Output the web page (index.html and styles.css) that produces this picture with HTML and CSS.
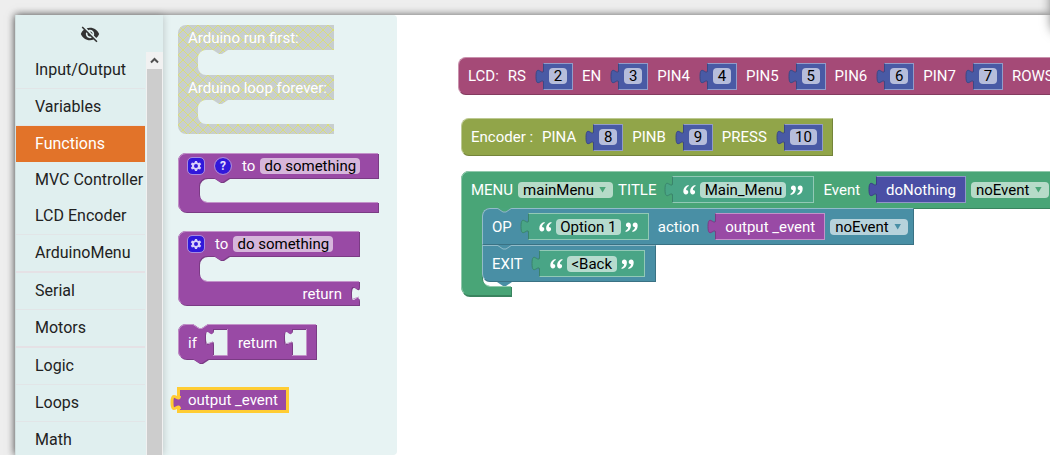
FILE: index.html
```html
<!DOCTYPE html>
<html lang="en">
<head>
<meta charset="utf-8">
<title>Block editor</title>
<link rel="stylesheet" href="styles.css">
</head>
<body>
<svg class="defs" aria-hidden="true">
  <defs>
    <pattern id="disabled" patternUnits="userSpaceOnUse" width="10" height="10">
      <rect width="10" height="10" fill="#aaa"/>
      <path d="M0 0l10 10M10 0l-10 10" stroke="#cc0"/>
    </pattern>
    <symbol id="tab" viewBox="0 0 9 17" overflow="visible">
      <path class="tab-fill" d="M9 16C9 6 1 24 1 8.500S9 11 9 1z"/>
      <path class="tab-edge" d="M8.500 15C8 8 1 22 1 8.500S8 9 8.500 2"/>
    </symbol>
    <symbol id="quote" viewBox="0 0 13 10">
      <path d="M5.500 0C2.300.700.300 2.900.300 6.300c0 2 1 3.200 2.600 3.200 1.400 0 2.400-1 2.400-2.400 0-1.300-.9-2.200-2.200-2.200C3.100 3.200 4 2 5.800 1zM12.300 0C9.100.700 7.100 2.900 7.100 6.300c0 2 1 3.200 2.600 3.200 1.400 0 2.400-1 2.400-2.400 0-1.300-.9-2.200-2.200-2.200 0-1.700.9-2.900 2.700-3.900z"/>
    </symbol>
    <symbol id="gear" viewBox="0 0 16 16">
      <path fill-rule="evenodd" d="M7 3h2l.4 1.600 1 .5 1.600-.6 1.200 1.800-1.200 1.200v1l1.200 1.200L12 11.500l-1.600-.6-1 .5L9 13H7l-.4-1.600-1-.5-1.600.6-1.200-1.800L4 8.500v-1L2.800 6.300 4 4.500l1.600.6 1-.5zM8 6a2 2 0 100 4 2 2 0 000-4z"/>
    </symbol>
  </defs>
</svg>
<main class="editor">
  <nav class="toolbox" aria-label="Toolbox">
    <button class="hide-button" type="button" aria-label="Hide toolbox">
      <svg viewBox="0 0 24 24" width="20" height="20"><path d="M12 7c2.760 0 5 2.240 5 5 0 .650-.130 1.260-.360 1.830l2.920 2.920c1.510-1.260 2.700-2.890 3.430-4.750-1.730-4.390-6-7.500-11-7.500-1.400 0-2.740.250-3.980.700l2.160 2.160C10.740 7.130 11.350 7 12 7zM2 4.270l2.280 2.280.460.460C3.080 8.300 1.780 10.020 1 12c1.730 4.390 6 7.500 11 7.500 1.550 0 3.030-.300 4.380-.840l.420.420L19.730 22 21 20.730 3.270 3 2 4.270zM7.530 9.800l1.550 1.550c-.050.210-.080.430-.080.650 0 1.660 1.340 3 3 3 .220 0 .440-.030.650-.080l1.550 1.550c-.670.330-1.410.530-2.200.530-2.760 0-5-2.240-5-5 0-.790.200-1.530.530-2.200zm4.310-.780l3.150 3.150.020-.160c0-1.660-1.340-3-3-3l-.170.010z"/></svg>
    </button>
    <div class="category-area">
      <div class="categories">
        <button type="button" class="category">Input/Output</button>
        <button type="button" class="category">Variables</button>
        <button type="button" class="category selected">Functions</button>
        <button type="button" class="category plain">MVC Controller</button>
        <button type="button" class="category">LCD Encoder</button>
        <button type="button" class="category thick">ArduinoMenu</button>
        <button type="button" class="category">Serial</button>
        <button type="button" class="category thick">Motors</button>
        <button type="button" class="category">Logic</button>
        <button type="button" class="category">Loops</button>
        <button type="button" class="category">Math</button>
      </div>
      <div class="scrollbar" aria-hidden="true">
        <svg viewBox="0 0 17 17" width="17" height="17"><path d="M5 10.500L8.500 7l3.500 3.500" fill="none" stroke="#505050" stroke-width="2"/></svg>
        <div class="thumb"></div>
      </div>
    </div>
  </nav>

  <section class="flyout" aria-label="Functions">
    <div class="block arduino">
      <svg class="shape"><path fill="url(#disabled)" fill-opacity=".5" d="M0 8a8 8 0 0 1 8-8H156V25H50l-6 4h-3l-6-4h-7a8 8 0 0 0-8 8v9a8 8 0 0 0 8 8H156V75H50l-6 4h-3l-6-4h-7a8 8 0 0 0-8 8v8a8 8 0 0 0 8 8H156V109H8a8 8 0 0 1-8-8z"/></svg>
      <div class="row low"><span>Arduino run first:</span></div>
      <div class="row low next"><span>Arduino loop forever:</span></div>
    </div>

    <div class="block procedure purple">
      <svg class="shape">
        <path class="dark" d="M0 8a8 8 0 0 1 8-8H200V25H51l-6 4h-3l-6-4h-7a8 8 0 0 0-8 8v8a8 8 0 0 0 8 8H200V59H8a8 8 0 0 1-8-8z"/>
        <path class="fill" d="M0 8a8 8 0 0 1 8-8H200V25H51l-6 4h-3l-6-4h-7a8 8 0 0 0-8 8v8a8 8 0 0 0 8 8H200V59H8a8 8 0 0 1-8-8z"/>
        <path class="light" d="M3 57a8 8 0 0 1-2.500-6V8A7.500 7.500 0 0 1 8 .5H200M24 47a8 8 0 0 0 5 2.500H200"/>
      </svg>
      <div class="row low">
        <button type="button" class="mini" aria-label="Settings"><svg width="16" height="16"><use href="#gear"/></svg></button>
        <button type="button" class="mini round" aria-label="Help">?</button>
        <span class="to">to</span>
        <input class="field name" value="do something" aria-label="Procedure name">
      </div>
    </div>

    <div class="block function purple">
      <svg class="shape">
        <path class="dark" d="M0 8a8 8 0 0 1 8-8H181V25H51l-6 4h-3l-6-4h-7a8 8 0 0 0-8 8v9a8 8 0 0 0 8 8H181v5c0 10-8-8-8 7.500s8-2.500 8 7.500V74H8a8 8 0 0 1-8-8z"/>
        <path class="fill" d="M0 8a8 8 0 0 1 8-8H181V25H51l-6 4h-3l-6-4h-7a8 8 0 0 0-8 8v9a8 8 0 0 0 8 8H181v5c0 10-8-8-8 7.500s8-2.500 8 7.500V74H8a8 8 0 0 1-8-8z"/>
        <path class="light" d="M3 72a8 8 0 0 1-2.500-6V8A7.500 7.500 0 0 1 8 .5H181M24 48a8 8 0 0 0 5 2.500H181M175 68l6-2"/>
      </svg>
      <div class="row low">
        <button type="button" class="mini" aria-label="Settings"><svg width="16" height="16"><use href="#gear"/></svg></button>
        <span class="to">to</span>
        <input class="field name" value="do something" aria-label="Function name">
      </div>
      <div class="row low next return-row"><span>return</span></div>
    </div>

    <div class="block if-return purple">
      <svg class="shape">
        <path class="dark" fill-rule="evenodd" d="M0 8a8 8 0 0 1 8-8H15l6 4h3l6-4H138V35H30l-6 4h-3l-6-4H8a8 8 0 0 1-8-8zM35 5H49V30H35V20c0-10-8 8-8-7.500s8 2.500 8-7.500zM114 5H128V30H114V20c0-10-8 8-8-7.500s8 2.500 8-7.500z"/>
        <path class="fill" fill-rule="evenodd" d="M0 8a8 8 0 0 1 8-8H15l6 4h3l6-4H138V35H30l-6 4h-3l-6-4H8a8 8 0 0 1-8-8zM35 5H49V31H35V22c0-10-8 8-8-7.500s8 2.500 8-7.500zM114 5H128V31H114V22c0-10-8 8-8-7.500s8 2.500 8-7.500z"/>
        <path class="light" d="M3 33a8 8 0 0 1-2.500-6V8A7.500 7.500 0 0 1 8 .5H15l6 4h3l6-4H138M49.500 5V31.500H35M128.500 5V31.500H114M28 20l7-2M107 20l7-2"/>
      </svg>
      <div class="row"><span>if</span><span class="return-label">return</span></div>
    </div>

    <div class="block output">
      <span class="value purple chosen"><svg class="tab"><use href="#tab"/></svg>output _event</span>
    </div>
  </section>

  <section class="canvas" aria-label="Workspace">
    <div class="block bar lcd pink">
      <span>LCD:</span>
      <span>RS</span><span class="value blue"><svg class="tab"><use href="#tab"/></svg><input class="field digit" value="2" aria-label="RS"></span>
      <span>EN</span><span class="value blue"><svg class="tab"><use href="#tab"/></svg><input class="field digit" value="3" aria-label="EN"></span>
      <span>PIN4</span><span class="value blue"><svg class="tab"><use href="#tab"/></svg><input class="field digit" value="4" aria-label="PIN4"></span>
      <span>PIN5</span><span class="value blue"><svg class="tab"><use href="#tab"/></svg><input class="field digit" value="5" aria-label="PIN5"></span>
      <span>PIN6</span><span class="value blue"><svg class="tab"><use href="#tab"/></svg><input class="field digit" value="6" aria-label="PIN6"></span>
      <span>PIN7</span><span class="value blue"><svg class="tab"><use href="#tab"/></svg><input class="field digit" value="7" aria-label="PIN7"></span>
      <span>ROWS</span>
    </div>

    <div class="block bar encoder olive">
      <span>Encoder :</span>
      <span>PINA</span><span class="value blue"><svg class="tab"><use href="#tab"/></svg><input class="field digit" value="8" aria-label="PINA"></span>
      <span>PINB</span><span class="value blue"><svg class="tab"><use href="#tab"/></svg><input class="field digit" value="9" aria-label="PINB"></span>
      <span>PRESS</span><span class="value blue"><svg class="tab"><use href="#tab"/></svg><input class="field digits" value="10" aria-label="PRESS"></span>
    </div>

    <div class="block menu green">
      <svg class="shape">
        <path class="dark" d="M0 8a8 8 0 0 1 8-8H640V37H51l-6 4h-3l-6-4h-7a8 8 0 0 0-8 8v62a8 8 0 0 0 8 8H50V125H8a8 8 0 0 1-8-8z"/>
        <path class="fill" d="M0 8a8 8 0 0 1 8-8H640V37H51l-6 4h-3l-6-4h-7a8 8 0 0 0-8 8v62a8 8 0 0 0 8 8H50V124H8a8 8 0 0 1-8-8z"/>
        <path class="light" d="M3 122a8 8 0 0 1-2.500-6V8A7.500 7.500 0 0 1 8 .5H640M24 113a8 8 0 0 0 5 2.500H50"/>
      </svg>
      <div class="row head">
        <span>MENU</span>
        <span class="choice"><select class="field" aria-label="Menu"><option>mainMenu</option></select></span>
        <span>TITLE</span>
        <span class="value teal"><svg class="tab"><use href="#tab"/></svg><svg class="quote"><use href="#quote"/></svg><input class="field title" value="Main_Menu" aria-label="Title"><svg class="quote close"><use href="#quote"/></svg></span>
        <span class="after">Event</span>
        <span class="value indigo"><svg class="tab"><use href="#tab"/></svg>doNothing</span>
        <span class="choice"><select class="field" aria-label="Event type"><option>noEvent</option></select></span>
      </div>
      <div class="statements">
        <div class="statement steel">
          <svg class="notch"><path d="M0 0l6 4h3l6-4z" fill="#49a57a"/><path d="M0 0l6 4h3l6-4" fill="none" stroke="#92b5c8"/></svg>
          <span>OP</span>
          <span class="value teal"><svg class="tab"><use href="#tab"/></svg><svg class="quote"><use href="#quote"/></svg><input class="field option" value="Option 1" aria-label="Option"><svg class="quote close"><use href="#quote"/></svg></span>
          <span class="after">action</span>
          <span class="value purple"><svg class="tab"><use href="#tab"/></svg>output _event</span>
          <span class="choice"><select class="field" aria-label="Action event"><option>noEvent</option></select></span>
        </div>
        <div class="statement steel">
          <svg class="notch"><path d="M0 0l6 4h3l6-4z" fill="#498fa5"/><path d="M0 0l6 4h3l6-4" fill="none" stroke="#92bcc9"/></svg>
          <span>EXIT</span>
          <span class="value teal wide-end"><svg class="tab"><use href="#tab"/></svg><svg class="quote"><use href="#quote"/></svg><input class="field back" value="&lt;Back" aria-label="Exit"><svg class="quote close"><use href="#quote"/></svg></span>
          <svg class="notch foot"><path d="M0 0l6 4h3l6-4z" fill="#498fa5"/></svg>
        </div>
      </div>
    </div>
  </section>
</main>
<div class="corner-shadow"></div>
</body>
</html>
```
FILE: styles.css
```css
* { box-sizing: border-box; }
body {
  margin: 0;
  height: 100vh;
  padding: 15px 0 0 15px;
  background: #eee;
  overflow: hidden;
  font: 16px/20px Roboto, sans-serif;
  color: #222;
}
button, input, select { font: inherit; color: inherit; border: 0; margin: 0; padding: 0; }
svg { display: block; }
.defs { position: absolute; width: 0; height: 0; }

.editor {
  display: flex;
  height: 100%;
  background: #fff;
  box-shadow: 0 0 8px rgba(0, 0, 0, .6);
}

.toolbox {
  display: flex;
  flex-direction: column;
  flex: 0 0 148px;
  background: #e0efef;
  border-left: 1px solid #d2e0e0;
  box-shadow: 0 0 8px rgba(0, 0, 0, .2);
  z-index: 1;
}
.hide-button {
  flex: 0 0 37px;
  display: flex;
  justify-content: center;
  align-items: center;
  background: none;
  fill: #333;
}
.category-area { display: flex; flex: 1; min-height: 0; }
.categories { flex: 1; overflow: hidden; padding-right: 1px; }
.category {
  display: block;
  width: 100%;
  height: 37px;
  padding-left: 19px;
  text-align: left;
  white-space: nowrap;
  background: none;
  border-bottom: 1px solid #e2e5e7;
}
.category.selected { height: 36px; background: #e27329; color: #fff; border: 0; }
.category.plain { height: 36px; border: 0; }
.category.thick { height: 38px; border-bottom: 2px solid #e5e1e5; }
.scrollbar {
  flex: 0 0 17px;
  display: flex;
  flex-direction: column;
  background: #f1f1f1;
}
.thumb { flex: 1; margin: 0 1px; background: #cdcdcd; }

.flyout {
  position: relative;
  flex: 0 0 234px;
  background: #e7f3f3;
  border-radius: 0 4px 4px 0;
}
.canvas { position: relative; flex: 1; overflow: hidden; }

.block { position: absolute; color: #fff; white-space: nowrap; font-size: 15px; }
.arduino { left: 15px; top: 10px; width: 156px; }
.procedure { left: 15px; top: 138px; width: 201px; }
.function { left: 15px; top: 216px; width: 182px; }
.if-return { left: 15px; top: 309px; width: 139px; }
.output { left: 14px; top: 372px; }
.lcd { left: 61px; top: 42px; width: 700px; }
.encoder { left: 64px; top: 103px; }
.menu { left: 64px; top: 156px; width: 640px; }

.shape { position: absolute; left: 0; top: 0; width: 100%; height: 100%; overflow: visible; }
.shape .fill { fill: var(--fill); }
.shape .dark { fill: var(--dark); transform: translate(1px, 1px); }
.shape .light { fill: none; stroke: var(--light); }

.row { position: relative; display: flex; align-items: center; height: 37px; padding-left: 10px; }
.row.low { height: 26px; }
.row.next { margin-top: 24px; }
.row .mini + .mini, .row .to { margin-left: 11px; }
.row .to { margin-right: 5px; }
.return-row { justify-content: flex-end; padding-right: 18px; }
.return-label { margin-left: 41px; }

.purple { --fill: #994aa5; --dark: #7a3b84; --light: #c292c9; }
.pink { --fill: #a54a77; --dark: #843b5f; --light: #c992ad; }
.olive { --fill: #91a549; --dark: #74843a; --light: #bdc992; }
.green { --fill: #49a577; --dark: #3a845f; --light: #92c9ad; }
.teal { --fill: #49a586; --dark: #3a846b; --light: #92c9b6; }
.steel { --fill: #498fa5; --dark: #3a7284; --light: #92bcc9; }
.blue { --fill: #495aa5; --dark: #3a4884; --light: #929cc9; }
.indigo { --fill: #4a4fa5; --dark: #3b3f84; --light: #9295c9; }

.bar, .statement {
  display: flex;
  align-items: center;
  height: 38px;
  gap: 9px;
  padding: 0 9px;
  background: var(--fill);
  border: 1px solid;
  border-color: var(--light) var(--dark) var(--dark) var(--light);
  border-radius: 8px 0 0 8px;
}

.value {
  position: relative;
  display: flex;
  align-items: center;
  height: 27px;
  margin-left: 8px;
  padding: 0 9px;
  color: #fff;
  background: var(--fill);
  border: 1px solid var(--light);
  border-left-color: var(--dark);
}
.value.teal { padding: 0 10px; }
.bar .value { padding: 0 5px; }
.tab { position: absolute; left: -9px; top: 4px; width: 9px; height: 17px; overflow: visible; }
.tab-fill { fill: var(--fill); }
.tab-edge { fill: none; stroke: var(--edge, var(--dark)); stroke-width: var(--edge-width, 1px); }
.chosen {
  --edge: #fc3;
  --edge-width: 3px;
  height: 26px;
  margin: 0;
  border: 3px solid #fc3;
  padding: 0 8px;
}

.field {
  height: 16px;
  line-height: 16px;
  border-radius: 4px;
  background: rgba(255, 255, 255, .6);
  color: #000;
  text-align: center;
}
.name { width: 100px; }
.digit { width: 18px; }
.digits { width: 27px; }
.title { width: 86px; }
.option { width: 65px; }
.back { width: 50px; }
.choice { position: relative; display: flex; }
.choice::after {
  content: "";
  position: absolute;
  right: 7px;
  top: 5px;
  width: 7px;
  height: 6px;
  background: var(--fill);
  clip-path: polygon(0 0, 100% 0, 50% 100%);
}
.choice select { appearance: none; padding: 0 19px 0 5px; text-align: left; }

.quote { width: 13px; height: 10px; fill: #fff; margin-right: 4px; }
.quote.close { transform: rotate(180deg); margin: 0 0 0 4px; }

.mini {
  width: 16px;
  height: 16px;
  border-radius: 4px;
  background: #3118db;
  outline: 1px solid #a68be0;
  fill: #d8d0fa;
  color: #e6e0ff;
  font: bold 12px/16px Roboto, sans-serif;
}
.mini.round { border-radius: 8px; }

.head { gap: 5px; }
.head .value, .statement .value { margin-left: 11px; }
.head .after, .statement .after { margin-left: 4px; }
.statements { display: flex; flex-direction: column; align-items: flex-start; padding-left: 21px; height: 88px; }
.statement { position: relative; height: 37px; gap: 5px; padding: 0 5px 0 9px; border-radius: 0; }
.statement:first-child { border-radius: 8px 0 0 0; }
.statement:last-child { border-radius: 0 0 0 8px; }
.statement .wide-end { margin-right: 5px; }
.notch { position: absolute; left: 14px; top: -1px; width: 15px; height: 5px; }
.notch.foot { top: auto; bottom: -6px; }

.corner-shadow {
  position: fixed;
  right: -40px;
  top: -16px;
  width: 38px;
  height: 48px;
  border-radius: 8px;
  box-shadow: 0 0 12px rgba(0, 0, 0, .6);
}
```
